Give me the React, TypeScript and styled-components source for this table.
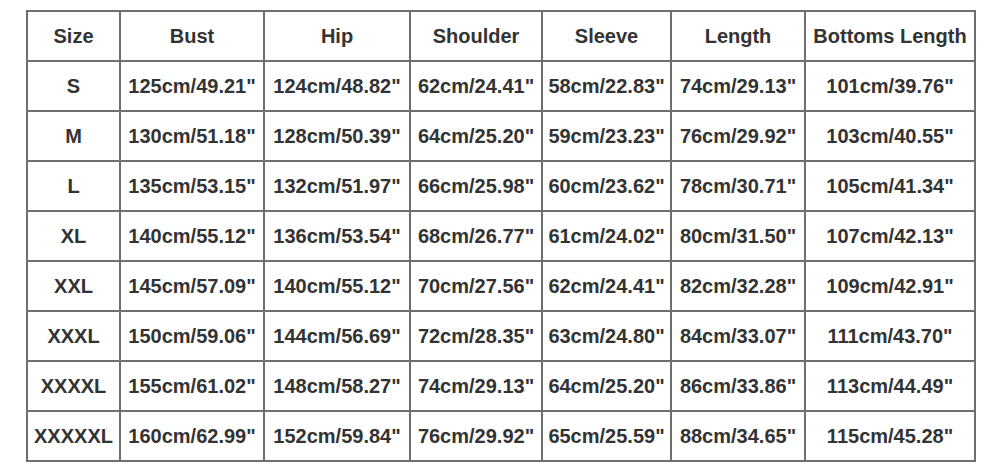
import React from 'react';
import styled, { createGlobalStyle } from 'styled-components';

const GlobalStyle = createGlobalStyle`
  html, body {
    margin: 0;
    padding: 0;
    background: #fff;
  }
`;

const columns = [
  { title: 'Size', width: 93 },
  { title: 'Bust', width: 144 },
  { title: 'Hip', width: 146 },
  { title: 'Shoulder', width: 132 },
  { title: 'Sleeve', width: 129 },
  { title: 'Length', width: 134 },
  { title: 'Bottoms Length', width: 170 },
];

const rows = [
  ['S', '125cm/49.21"', '124cm/48.82"', '62cm/24.41"', '58cm/22.83"', '74cm/29.13"', '101cm/39.76"'],
  ['M', '130cm/51.18"', '128cm/50.39"', '64cm/25.20"', '59cm/23.23"', '76cm/29.92"', '103cm/40.55"'],
  ['L', '135cm/53.15"', '132cm/51.97"', '66cm/25.98"', '60cm/23.62"', '78cm/30.71"', '105cm/41.34"'],
  ['XL', '140cm/55.12"', '136cm/53.54"', '68cm/26.77"', '61cm/24.02"', '80cm/31.50"', '107cm/42.13"'],
  ['XXL', '145cm/57.09"', '140cm/55.12"', '70cm/27.56"', '62cm/24.41"', '82cm/32.28"', '109cm/42.91"'],
  ['XXXL', '150cm/59.06"', '144cm/56.69"', '72cm/28.35"', '63cm/24.80"', '84cm/33.07"', '111cm/43.70"'],
  ['XXXXL', '155cm/61.02"', '148cm/58.27"', '74cm/29.13"', '64cm/25.20"', '86cm/33.86"', '113cm/44.49"'],
  ['XXXXXL', '160cm/62.99"', '152cm/59.84"', '76cm/29.92"', '65cm/25.59"', '88cm/34.65"', '115cm/45.28"'],
];

export default function App() {
  return (
    <>
      <GlobalStyle />
      <Page>
        <SizeTable>
          <colgroup>
            {columns.map((c) => (
              <col key={c.title} style={{ width: c.width }} />
            ))}
          </colgroup>
          <thead>
            <tr>
              {columns.map((c) => (
                <HeadCell key={c.title}>{c.title}</HeadCell>
              ))}
            </tr>
          </thead>
          <tbody>
            {rows.map((row) => (
              <tr key={row[0]}>
                {row.map((value, i) => (
                  <Cell key={i}>{value}</Cell>
                ))}
              </tr>
            ))}
          </tbody>
        </SizeTable>
      </Page>
    </>
  );
}

const Page = styled.div`
  width: 1000px;
  height: 471px;
  padding: 10px 0 0 26px;
  box-sizing: border-box;
  background: #fff;
`;

const SizeTable = styled.table`
  width: 949px;
  table-layout: fixed;
  border-collapse: collapse;
  font-family: 'Liberation Sans', Arial, sans-serif;
  font-weight: bold;
  font-size: 20px;
  color: #333;
`;

const HeadCell = styled.th`
  height: 50px;
  padding: 0;
  box-sizing: border-box;
  border: 2px solid #6f6f6f;
  text-align: center;
  vertical-align: middle;
  white-space: nowrap;
`;

const Cell = styled.td`
  height: 50px;
  padding: 0;
  box-sizing: border-box;
  border: 2px solid #6f6f6f;
  text-align: center;
  vertical-align: middle;
  white-space: nowrap;
`;
